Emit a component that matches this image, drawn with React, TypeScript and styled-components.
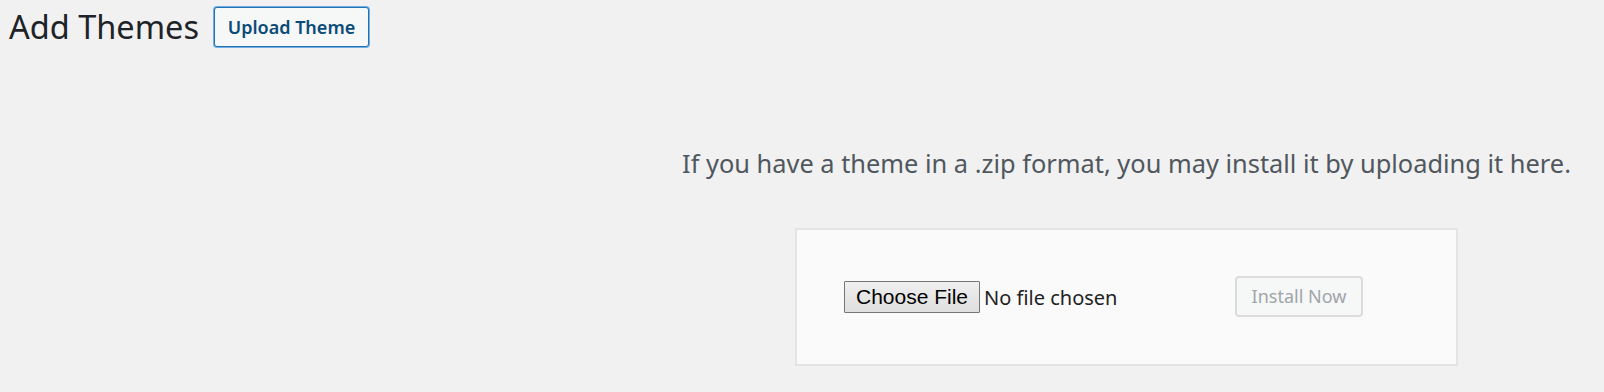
import React from "react";
import styled, { createGlobalStyle } from "styled-components";

const Global = createGlobalStyle`
  html, body { margin: 0; padding: 0; background: #f1f1f1; }
  body { font-family: "Noto Sans", "Open Sans", sans-serif; color: #1d2327; }
`;

const Page = styled.div`
  width: 1604px;
  height: 392px;
  box-sizing: border-box;
  padding-top: 7px;
`;

const Header = styled.div`
  display: flex;
  align-items: center;
  gap: 15px;
  height: 40px;
  padding-left: 9px;
`;

const Title = styled.h1`
  margin: 0;
  font-size: 32.5px;
  font-weight: 400;
  color: #1d2327;
  line-height: 40px;
`;

const OutlineButton = styled.button`
  font-family: inherit;
  font-size: 18px;
  font-weight: 600;
  color: #0a4b78;
  background: #f6f7f7;
  border: 1px solid #2271b1;
  border-radius: 3px;
  box-shadow: 0 0 0 1px #72aee6;
  box-sizing: border-box;
  height: 40px;
  width: 155px;
  padding: 0;
`;

const UploadArea = styled.div`
  display: flex;
  flex-direction: column;
  align-items: center;
  padding-left: 649px;
  margin-top: 99px;
`;

const Instructions = styled.p`
  margin: 0 0 47px 0;
  font-size: 25.4px;
  line-height: 35px;
  color: #50575e;
  white-space: nowrap;
`;

const Box = styled.div`
  width: 663px;
  height: 138px;
  box-sizing: border-box;
  background: #fafafa;
  border: 2px solid #e4e4e4;
  display: flex;
  align-items: center;
  padding-left: 47px;
`;

const FileButton = styled.span`
  display: inline-flex;
  align-items: center;
  justify-content: center;
  box-sizing: border-box;
  width: 136px;
  height: 32px;
  font-family: "Liberation Sans", Arial, sans-serif;
  font-size: 21px;
  color: #000;
  background: linear-gradient(#efefef, #dedede);
  border: 1px solid #767676;
  border-radius: 1px;
`;

const FileLabel = styled.span`
  font-size: 20px;
  color: #222;
  box-sizing: border-box;
  padding-left: 4px;
  width: 255px;
`;

const DisabledButton = styled.button`
  font-family: inherit;
  font-size: 18px;
  color: #a0a5aa;
  background: #f6f7f7;
  border: 2px solid #dcdcde;
  border-radius: 4px;
  box-sizing: border-box;
  height: 41px;
  width: 128px;
  padding: 0;
  margin-top: -2px;
`;

export default function App() {
  return (
    <>
      <Global />
      <Page>
        <Header>
          <Title>Add Themes</Title>
          <OutlineButton>Upload Theme</OutlineButton>
        </Header>
        <UploadArea>
          <Instructions>
            If you have a theme in a .zip format, you may install it by uploading it here.
          </Instructions>
          <Box>
            <FileButton>Choose File</FileButton>
            <FileLabel>No file chosen</FileLabel>
            <DisabledButton disabled>Install Now</DisabledButton>
          </Box>
        </UploadArea>
      </Page>
    </>
  );
}
